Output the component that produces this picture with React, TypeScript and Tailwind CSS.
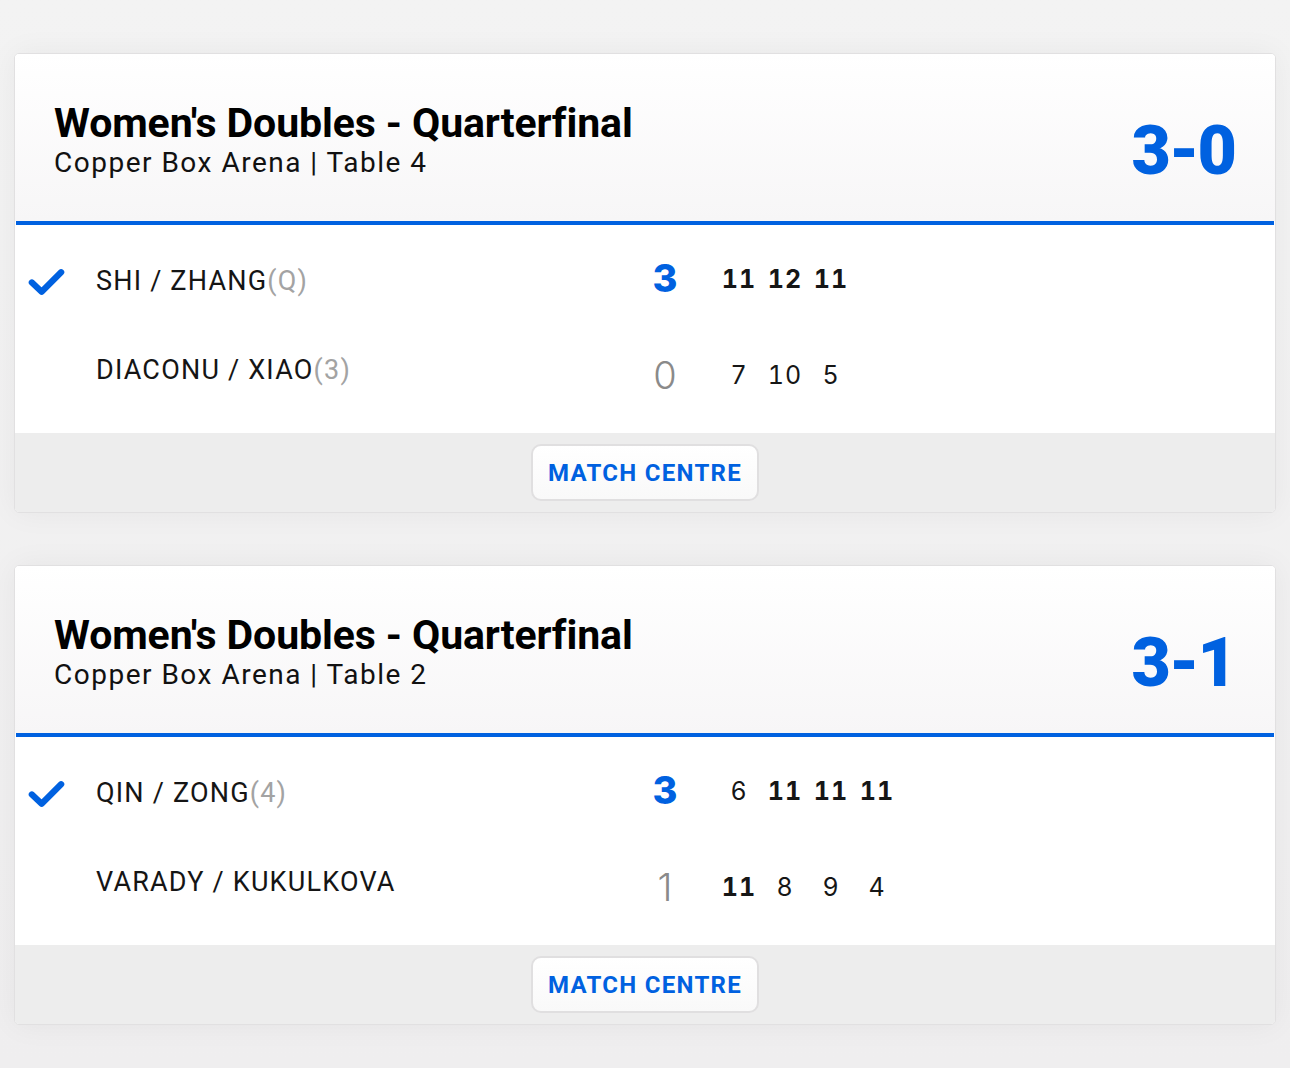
import React from "react";

type Team = {
  name: string;
  seed?: string;
  sets: number;
  games: number[];
  winner: boolean;
};

type Match = {
  title: string;
  venue: string;
  score: string;
  teams: [Team, Team];
};

const MATCHES: Match[] = [
  {
    title: "Women's Doubles - Quarterfinal",
    venue: "Copper Box Arena | Table 4",
    score: "3-0",
    teams: [
      { name: "SHI / ZHANG", seed: "(Q)", sets: 3, games: [11, 12, 11], winner: true },
      { name: "DIACONU / XIAO", seed: "(3)", sets: 0, games: [7, 10, 5], winner: false },
    ],
  },
  {
    title: "Women's Doubles - Quarterfinal",
    venue: "Copper Box Arena | Table 2",
    score: "3-1",
    teams: [
      { name: "QIN / ZONG", seed: "(4)", sets: 3, games: [6, 11, 11, 11], winner: true },
      { name: "VARADY / KUKULKOVA", sets: 1, games: [11, 8, 9, 4], winner: false },
    ],
  },
];

function Check() {
  return (
    <svg viewBox="0 0 38 30" className="w-[38px] h-[30px]" fill="none">
      <path
        d="M4 15.5 L14 25 L34 5"
        stroke="#0061e0"
        strokeWidth={6.5}
        strokeLinecap="round"
        strokeLinejoin="round"
      />
    </svg>
  );
}

function TeamRow({ team, other }: { team: Team; other: Team }) {
  return (
    <div className="h-[89px] flex items-center">
      <div className="w-[50px] pl-[13px] flex items-center">{team.winner && <Check />}</div>
      <div className="w-[31px]" />
      <div className="w-[549px] text-[27px] tracking-[1.2px] text-[#151515] font-['Roboto',sans-serif]">
        {team.name}
        {team.seed && <span className="text-[#a3a3a3]">{team.seed}</span>}
      </div>
      <div
        className={`w-[40px] text-center text-[38px] leading-none font-['Inter',sans-serif] ${
          team.winner ? "font-extrabold text-[#0061e0] -mt-[8px]" : "font-light text-[#8a8a8a] mt-[8px]"
        }`}
      >
        {team.sets}
      </div>
      <div className="w-[31px]" />
      <div className={`flex ${team.winner ? "-mt-[4px]" : "mt-[10px]"}`}>
        {team.games.map((g, i) => (
          <div
            key={i}
            className={`w-[46px] text-center text-[25px] leading-none tabular-nums tracking-[1px] text-[#161616] font-['Inter',sans-serif] ${
              g > other.games[i] ? "font-bold" : "font-normal"
            }`}
          >
            {g}
          </div>
        ))}
      </div>
    </div>
  );
}

function MatchCard({ match }: { match: Match }) {
  return (
    <div className="rounded-[5px] border border-[#e1e0e1] bg-white shadow-[0_0_30px_rgba(0,0,0,0.05)] overflow-hidden">
      <div className="h-[167px] pl-[39px] pr-[40px] flex items-center justify-between bg-gradient-to-b from-white to-[#f7f6f7]">
        <div className="pt-[4px]">
          <div className="text-[41px] font-bold leading-[46px] tracking-[-0.1px] text-black font-['Roboto',sans-serif]">
            {match.title}
          </div>
          <div className="text-[28px] leading-[34px] tracking-[1.5px] text-[#111] font-['Roboto',sans-serif]">
            {match.venue}
          </div>
        </div>
        <div className="pt-[26px] text-[68px] leading-none font-black tracking-[-2px] text-[#0061e0] font-['Roboto',sans-serif]">
          {match.score}
        </div>
      </div>
      <div className="h-[4px] bg-[#0061e0] mx-[1px]" />
      <div className="pt-[12px] pb-[18px] bg-white">
        <TeamRow team={match.teams[0]} other={match.teams[1]} />
        <TeamRow team={match.teams[1]} other={match.teams[0]} />
      </div>
      <div className="h-[79px] bg-[#ededed] flex items-center justify-center">
        <button className="w-[228px] h-[57px] rounded-[10px] border-2 border-[#e0dfe0] bg-gradient-to-b from-white to-[#f9f9f9] text-[24px] font-bold tracking-[1.3px] text-[#0061e0] font-['Roboto',sans-serif]">
          MATCH CENTRE
        </button>
      </div>
    </div>
  );
}

export default function App() {
  return (
    <div className="min-h-[1068px] bg-gradient-to-b from-[#f3f3f3] to-[#efeeef] px-[14px] pt-[53px] pb-[40px] flex flex-col gap-[52px]">
      {MATCHES.map((m, i) => (
        <MatchCard key={i} match={m} />
      ))}
    </div>
  );
}
